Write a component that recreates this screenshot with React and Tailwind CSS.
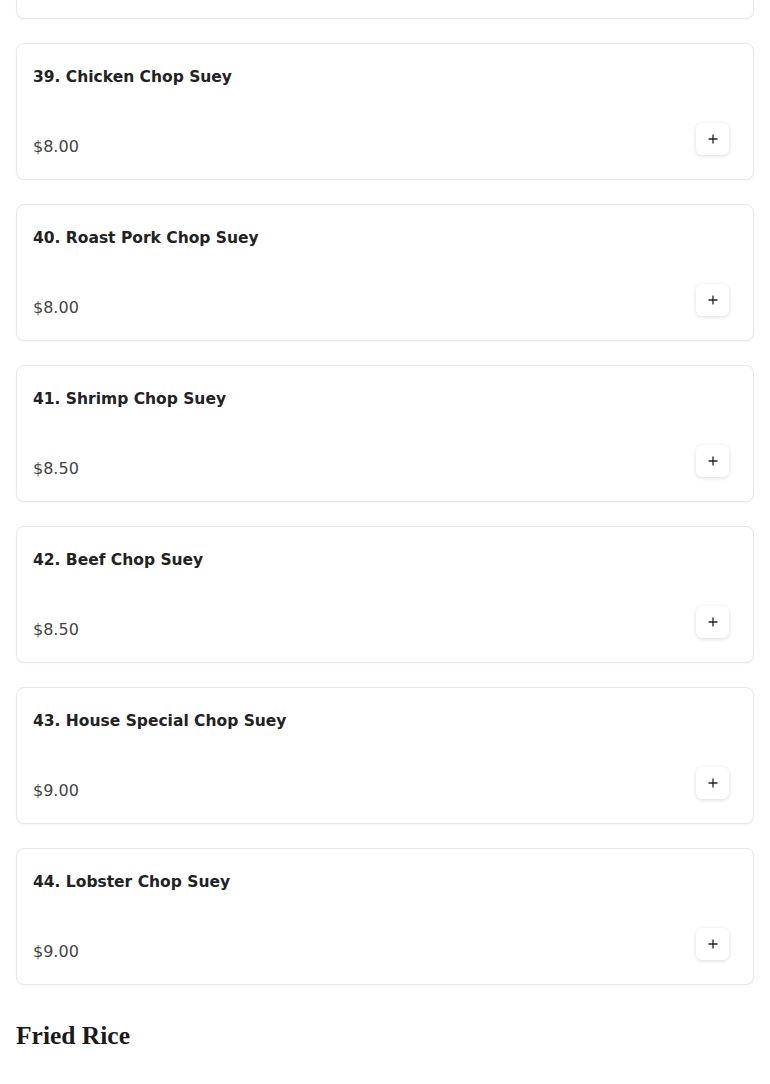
const items = [
  { name: '39. Chicken Chop Suey', price: '$8.00' },
  { name: '40. Roast Pork Chop Suey', price: '$8.00' },
  { name: '41. Shrimp Chop Suey', price: '$8.50' },
  { name: '42. Beef Chop Suey', price: '$8.50' },
  { name: '43. House Special Chop Suey', price: '$9.00' },
  { name: '44. Lobster Chop Suey', price: '$9.00' },
];

const PlusIcon = () => (
  <svg width="12" height="12" viewBox="0 0 12 12" fill="none" stroke="#222" strokeWidth="1.3">
    <path d="M6 1.5v9M1.5 6h9" />
  </svg>
);

export default function App() {
  return (
    <div className="min-h-screen bg-white px-4 overflow-hidden" style={{ fontFamily: '"DejaVu Sans", sans-serif' }}>
      <div className="flex flex-col gap-6">
        {/* tail of the previous card, scrolled out of view */}
        <div className="h-[19px] rounded-b-lg border border-t-0 border-[#e8e8e8] bg-white shadow-[0_1px_2px_rgba(0,0,0,0.04)]" />
        {items.map((item) => (
          <div
            key={item.name}
            className="h-[137px] rounded-lg border border-[#e8e8e8] bg-white p-4 flex flex-col shadow-[0_1px_2px_rgba(0,0,0,0.04)]"
          >
            <h3 className="h-8 pt-[1px] leading-8 text-[15.5px] font-bold text-[#222]">{item.name}</h3>
            <div className="mt-[31px] h-10 flex justify-between items-start">
              <span className="mt-3 leading-6 text-[16px] text-[#444]">{item.price}</span>
              <button className="mr-2 w-[33px] h-8 rounded-md bg-white flex items-center justify-center shadow-[0_1px_4px_rgba(0,0,0,0.14)]">
                <PlusIcon />
              </button>
            </div>
          </div>
        ))}
      </div>
      <h2
        className="mt-[35px] h-8 leading-8 text-[25.5px] font-bold text-[#1a1a1a]"
        style={{ fontFamily: '"Liberation Serif", serif' }}
      >
        Fried Rice
      </h2>
    </div>
  );
}
